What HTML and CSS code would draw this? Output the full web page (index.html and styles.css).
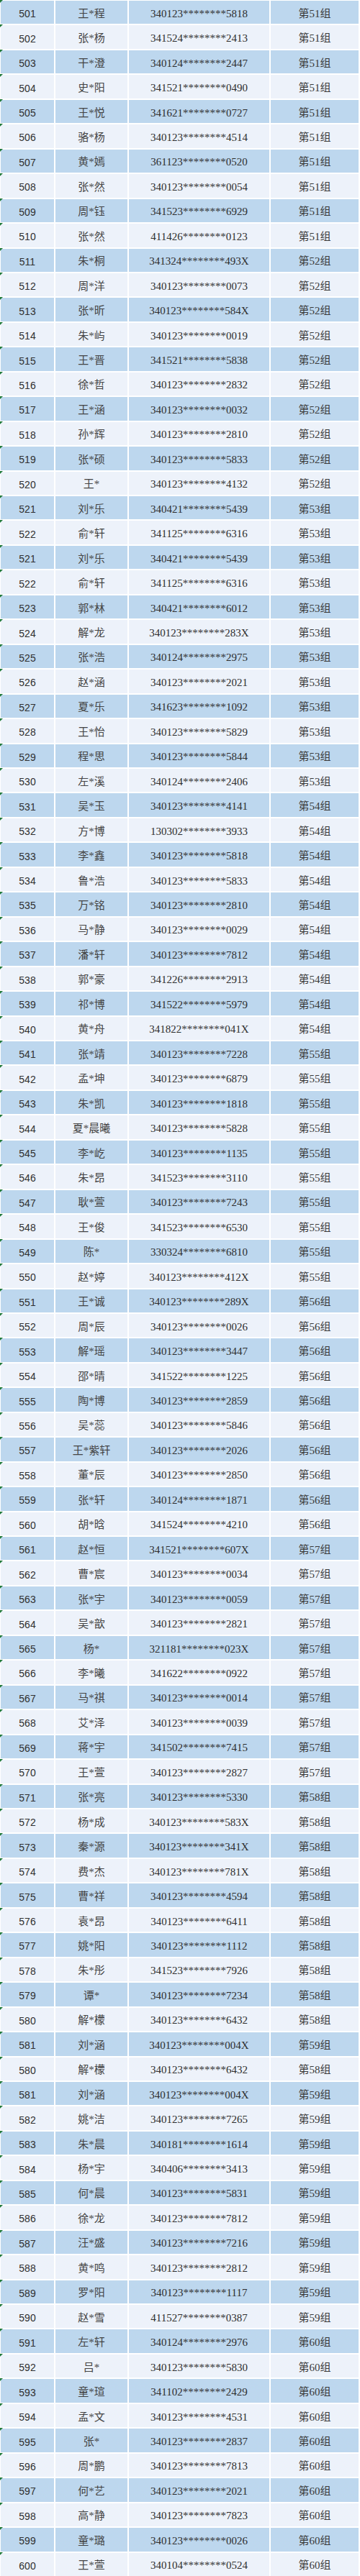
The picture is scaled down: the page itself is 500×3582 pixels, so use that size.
FILE: index.html
```html
<!DOCTYPE html>
<html lang="zh-CN">
<head>
<meta charset="utf-8">
<title>分组名单</title>
<link rel="stylesheet" href="styles.css">
</head>
<body>
<main class="sheet">
<div class="row"><span class="c no">501</span><span class="c nm">王*程</span><span class="c id">340123********5818</span><span class="c gp">第51组</span></div>
<div class="row"><span class="c no">502</span><span class="c nm">张*杨</span><span class="c id">341524********2413</span><span class="c gp">第51组</span></div>
<div class="row"><span class="c no">503</span><span class="c nm">干*澄</span><span class="c id">340124********2447</span><span class="c gp">第51组</span></div>
<div class="row"><span class="c no">504</span><span class="c nm">史*阳</span><span class="c id">341521********0490</span><span class="c gp">第51组</span></div>
<div class="row"><span class="c no">505</span><span class="c nm">王*悦</span><span class="c id">341621********0727</span><span class="c gp">第51组</span></div>
<div class="row"><span class="c no">506</span><span class="c nm">骆*杨</span><span class="c id">340123********4514</span><span class="c gp">第51组</span></div>
<div class="row"><span class="c no">507</span><span class="c nm">黄*嫣</span><span class="c id">361123********0520</span><span class="c gp">第51组</span></div>
<div class="row"><span class="c no">508</span><span class="c nm">张*然</span><span class="c id">340123********0054</span><span class="c gp">第51组</span></div>
<div class="row"><span class="c no">509</span><span class="c nm">周*钰</span><span class="c id">341523********6929</span><span class="c gp">第51组</span></div>
<div class="row"><span class="c no">510</span><span class="c nm">张*然</span><span class="c id">411426********0123</span><span class="c gp">第51组</span></div>
<div class="row"><span class="c no">511</span><span class="c nm">朱*桐</span><span class="c id">341324********493X</span><span class="c gp">第52组</span></div>
<div class="row"><span class="c no">512</span><span class="c nm">周*洋</span><span class="c id">340123********0073</span><span class="c gp">第52组</span></div>
<div class="row"><span class="c no">513</span><span class="c nm">张*昕</span><span class="c id">340123********584X</span><span class="c gp">第52组</span></div>
<div class="row"><span class="c no">514</span><span class="c nm">朱*屿</span><span class="c id">340123********0019</span><span class="c gp">第52组</span></div>
<div class="row"><span class="c no">515</span><span class="c nm">王*晋</span><span class="c id">341521********5838</span><span class="c gp">第52组</span></div>
<div class="row"><span class="c no">516</span><span class="c nm">徐*哲</span><span class="c id">340123********2832</span><span class="c gp">第52组</span></div>
<div class="row"><span class="c no">517</span><span class="c nm">王*涵</span><span class="c id">340123********0032</span><span class="c gp">第52组</span></div>
<div class="row"><span class="c no">518</span><span class="c nm">孙*辉</span><span class="c id">340123********2810</span><span class="c gp">第52组</span></div>
<div class="row"><span class="c no">519</span><span class="c nm">张*硕</span><span class="c id">340123********5833</span><span class="c gp">第52组</span></div>
<div class="row"><span class="c no">520</span><span class="c nm">王*</span><span class="c id">340123********4132</span><span class="c gp">第52组</span></div>
<div class="row"><span class="c no">521</span><span class="c nm">刘*乐</span><span class="c id">340421********5439</span><span class="c gp">第53组</span></div>
<div class="row"><span class="c no">522</span><span class="c nm">俞*轩</span><span class="c id">341125********6316</span><span class="c gp">第53组</span></div>
<div class="row"><span class="c no">521</span><span class="c nm">刘*乐</span><span class="c id">340421********5439</span><span class="c gp">第53组</span></div>
<div class="row"><span class="c no">522</span><span class="c nm">俞*轩</span><span class="c id">341125********6316</span><span class="c gp">第53组</span></div>
<div class="row"><span class="c no">523</span><span class="c nm">郭*林</span><span class="c id">340421********6012</span><span class="c gp">第53组</span></div>
<div class="row"><span class="c no">524</span><span class="c nm">解*龙</span><span class="c id">340123********283X</span><span class="c gp">第53组</span></div>
<div class="row"><span class="c no">525</span><span class="c nm">张*浩</span><span class="c id">340124********2975</span><span class="c gp">第53组</span></div>
<div class="row"><span class="c no">526</span><span class="c nm">赵*涵</span><span class="c id">340123********2021</span><span class="c gp">第53组</span></div>
<div class="row"><span class="c no">527</span><span class="c nm">夏*乐</span><span class="c id">341623********1092</span><span class="c gp">第53组</span></div>
<div class="row"><span class="c no">528</span><span class="c nm">王*怡</span><span class="c id">340123********5829</span><span class="c gp">第53组</span></div>
<div class="row"><span class="c no">529</span><span class="c nm">程*思</span><span class="c id">340123********5844</span><span class="c gp">第53组</span></div>
<div class="row"><span class="c no">530</span><span class="c nm">左*溪</span><span class="c id">340124********2406</span><span class="c gp">第53组</span></div>
<div class="row"><span class="c no">531</span><span class="c nm">吴*玉</span><span class="c id">340123********4141</span><span class="c gp">第54组</span></div>
<div class="row"><span class="c no">532</span><span class="c nm">方*博</span><span class="c id">130302********3933</span><span class="c gp">第54组</span></div>
<div class="row"><span class="c no">533</span><span class="c nm">李*鑫</span><span class="c id">340123********5818</span><span class="c gp">第54组</span></div>
<div class="row"><span class="c no">534</span><span class="c nm">鲁*浩</span><span class="c id">340123********5833</span><span class="c gp">第54组</span></div>
<div class="row"><span class="c no">535</span><span class="c nm">万*铭</span><span class="c id">340123********2810</span><span class="c gp">第54组</span></div>
<div class="row"><span class="c no">536</span><span class="c nm">马*静</span><span class="c id">340123********0029</span><span class="c gp">第54组</span></div>
<div class="row"><span class="c no">537</span><span class="c nm">潘*轩</span><span class="c id">340123********7812</span><span class="c gp">第54组</span></div>
<div class="row"><span class="c no">538</span><span class="c nm">郭*豪</span><span class="c id">341226********2913</span><span class="c gp">第54组</span></div>
<div class="row"><span class="c no">539</span><span class="c nm">祁*博</span><span class="c id">341522********5979</span><span class="c gp">第54组</span></div>
<div class="row"><span class="c no">540</span><span class="c nm">黄*舟</span><span class="c id">341822********041X</span><span class="c gp">第54组</span></div>
<div class="row"><span class="c no">541</span><span class="c nm">张*靖</span><span class="c id">340123********7228</span><span class="c gp">第55组</span></div>
<div class="row"><span class="c no">542</span><span class="c nm">孟*坤</span><span class="c id">340123********6879</span><span class="c gp">第55组</span></div>
<div class="row"><span class="c no">543</span><span class="c nm">朱*凯</span><span class="c id">340123********1818</span><span class="c gp">第55组</span></div>
<div class="row"><span class="c no">544</span><span class="c nm">夏*晨曦</span><span class="c id">340123********5828</span><span class="c gp">第55组</span></div>
<div class="row"><span class="c no">545</span><span class="c nm">李*屹</span><span class="c id">340123********1135</span><span class="c gp">第55组</span></div>
<div class="row"><span class="c no">546</span><span class="c nm">朱*昂</span><span class="c id">341523********3110</span><span class="c gp">第55组</span></div>
<div class="row"><span class="c no">547</span><span class="c nm">耿*萱</span><span class="c id">340123********7243</span><span class="c gp">第55组</span></div>
<div class="row"><span class="c no">548</span><span class="c nm">王*俊</span><span class="c id">341523********6530</span><span class="c gp">第55组</span></div>
<div class="row"><span class="c no">549</span><span class="c nm">陈*</span><span class="c id">330324********6810</span><span class="c gp">第55组</span></div>
<div class="row"><span class="c no">550</span><span class="c nm">赵*婷</span><span class="c id">340123********412X</span><span class="c gp">第55组</span></div>
<div class="row"><span class="c no">551</span><span class="c nm">王*诚</span><span class="c id">340123********289X</span><span class="c gp">第56组</span></div>
<div class="row"><span class="c no">552</span><span class="c nm">周*辰</span><span class="c id">340123********0026</span><span class="c gp">第56组</span></div>
<div class="row"><span class="c no">553</span><span class="c nm">解*瑶</span><span class="c id">340123********3447</span><span class="c gp">第56组</span></div>
<div class="row"><span class="c no">554</span><span class="c nm">邵*晴</span><span class="c id">341522********1225</span><span class="c gp">第56组</span></div>
<div class="row"><span class="c no">555</span><span class="c nm">陶*博</span><span class="c id">340123********2859</span><span class="c gp">第56组</span></div>
<div class="row"><span class="c no">556</span><span class="c nm">吴*蕊</span><span class="c id">340123********5846</span><span class="c gp">第56组</span></div>
<div class="row"><span class="c no">557</span><span class="c nm">王*紫轩</span><span class="c id">340123********2026</span><span class="c gp">第56组</span></div>
<div class="row"><span class="c no">558</span><span class="c nm">董*辰</span><span class="c id">340123********2850</span><span class="c gp">第56组</span></div>
<div class="row"><span class="c no">559</span><span class="c nm">张*轩</span><span class="c id">340124********1871</span><span class="c gp">第56组</span></div>
<div class="row"><span class="c no">560</span><span class="c nm">胡*晗</span><span class="c id">341524********4210</span><span class="c gp">第56组</span></div>
<div class="row"><span class="c no">561</span><span class="c nm">赵*恒</span><span class="c id">341521********607X</span><span class="c gp">第57组</span></div>
<div class="row"><span class="c no">562</span><span class="c nm">曹*宸</span><span class="c id">340123********0034</span><span class="c gp">第57组</span></div>
<div class="row"><span class="c no">563</span><span class="c nm">张*宇</span><span class="c id">340123********0059</span><span class="c gp">第57组</span></div>
<div class="row"><span class="c no">564</span><span class="c nm">吴*歆</span><span class="c id">340123********2821</span><span class="c gp">第57组</span></div>
<div class="row"><span class="c no">565</span><span class="c nm">杨*</span><span class="c id">321181********023X</span><span class="c gp">第57组</span></div>
<div class="row"><span class="c no">566</span><span class="c nm">李*曦</span><span class="c id">341622********0922</span><span class="c gp">第57组</span></div>
<div class="row"><span class="c no">567</span><span class="c nm">马*祺</span><span class="c id">340123********0014</span><span class="c gp">第57组</span></div>
<div class="row"><span class="c no">568</span><span class="c nm">艾*泽</span><span class="c id">340123********0039</span><span class="c gp">第57组</span></div>
<div class="row"><span class="c no">569</span><span class="c nm">蒋*宇</span><span class="c id">341502********7415</span><span class="c gp">第57组</span></div>
<div class="row"><span class="c no">570</span><span class="c nm">王*萱</span><span class="c id">340123********2827</span><span class="c gp">第57组</span></div>
<div class="row"><span class="c no">571</span><span class="c nm">张*亮</span><span class="c id">340123********5330</span><span class="c gp">第58组</span></div>
<div class="row"><span class="c no">572</span><span class="c nm">杨*成</span><span class="c id">340123********583X</span><span class="c gp">第58组</span></div>
<div class="row"><span class="c no">573</span><span class="c nm">秦*源</span><span class="c id">340123********341X</span><span class="c gp">第58组</span></div>
<div class="row"><span class="c no">574</span><span class="c nm">费*杰</span><span class="c id">340123********781X</span><span class="c gp">第58组</span></div>
<div class="row"><span class="c no">575</span><span class="c nm">曹*祥</span><span class="c id">340123********4594</span><span class="c gp">第58组</span></div>
<div class="row"><span class="c no">576</span><span class="c nm">袁*昂</span><span class="c id">340123********6411</span><span class="c gp">第58组</span></div>
<div class="row"><span class="c no">577</span><span class="c nm">姚*阳</span><span class="c id">340123********1112</span><span class="c gp">第58组</span></div>
<div class="row"><span class="c no">578</span><span class="c nm">朱*彤</span><span class="c id">341523********7926</span><span class="c gp">第58组</span></div>
<div class="row"><span class="c no">579</span><span class="c nm">谭*</span><span class="c id">340123********7234</span><span class="c gp">第58组</span></div>
<div class="row"><span class="c no">580</span><span class="c nm">解*檬</span><span class="c id">340123********6432</span><span class="c gp">第58组</span></div>
<div class="row"><span class="c no">581</span><span class="c nm">刘*涵</span><span class="c id">340123********004X</span><span class="c gp">第59组</span></div>
<div class="row"><span class="c no">580</span><span class="c nm">解*檬</span><span class="c id">340123********6432</span><span class="c gp">第58组</span></div>
<div class="row"><span class="c no">581</span><span class="c nm">刘*涵</span><span class="c id">340123********004X</span><span class="c gp">第59组</span></div>
<div class="row"><span class="c no">582</span><span class="c nm">姚*洁</span><span class="c id">340123********7265</span><span class="c gp">第59组</span></div>
<div class="row"><span class="c no">583</span><span class="c nm">朱*晨</span><span class="c id">340181********1614</span><span class="c gp">第59组</span></div>
<div class="row"><span class="c no">584</span><span class="c nm">杨*宇</span><span class="c id">340406********3413</span><span class="c gp">第59组</span></div>
<div class="row"><span class="c no">585</span><span class="c nm">何*晨</span><span class="c id">340123********5831</span><span class="c gp">第59组</span></div>
<div class="row"><span class="c no">586</span><span class="c nm">徐*龙</span><span class="c id">340123********7812</span><span class="c gp">第59组</span></div>
<div class="row"><span class="c no">587</span><span class="c nm">汪*盛</span><span class="c id">340123********7216</span><span class="c gp">第59组</span></div>
<div class="row"><span class="c no">588</span><span class="c nm">黄*鸣</span><span class="c id">340123********2812</span><span class="c gp">第59组</span></div>
<div class="row"><span class="c no">589</span><span class="c nm">罗*阳</span><span class="c id">340123********1117</span><span class="c gp">第59组</span></div>
<div class="row"><span class="c no">590</span><span class="c nm">赵*雪</span><span class="c id">411527********0387</span><span class="c gp">第59组</span></div>
<div class="row"><span class="c no">591</span><span class="c nm">左*轩</span><span class="c id">340124********2976</span><span class="c gp">第60组</span></div>
<div class="row"><span class="c no">592</span><span class="c nm">吕*</span><span class="c id">340123********5830</span><span class="c gp">第60组</span></div>
<div class="row"><span class="c no">593</span><span class="c nm">童*瑄</span><span class="c id">341102********2429</span><span class="c gp">第60组</span></div>
<div class="row"><span class="c no">594</span><span class="c nm">孟*文</span><span class="c id">340123********4531</span><span class="c gp">第60组</span></div>
<div class="row"><span class="c no">595</span><span class="c nm">张*</span><span class="c id">340123********2837</span><span class="c gp">第60组</span></div>
<div class="row"><span class="c no">596</span><span class="c nm">周*鹏</span><span class="c id">340123********7813</span><span class="c gp">第60组</span></div>
<div class="row"><span class="c no">597</span><span class="c nm">何*艺</span><span class="c id">340123********2021</span><span class="c gp">第60组</span></div>
<div class="row"><span class="c no">598</span><span class="c nm">高*静</span><span class="c id">340123********7823</span><span class="c gp">第60组</span></div>
<div class="row"><span class="c no">599</span><span class="c nm">童*璐</span><span class="c id">340123********0026</span><span class="c gp">第60组</span></div>
<div class="row"><span class="c no">600</span><span class="c nm">王*萱</span><span class="c id">340104********0524</span><span class="c gp">第60组</span></div>
</main>
</body>
</html>
```
FILE: styles.css
```css
html, body {
  margin: 0;
  padding: 0;
  background: #ffffff;
}

.sheet {
  box-sizing: border-box;
  width: 500px;
  height: 3582px;
  padding-top: 1px;
  display: grid;
  grid-template-rows: repeat(104, 1fr);
  row-gap: 2px;
  overflow: hidden;
}

.row {
  position: relative;
  display: grid;
  grid-template-columns: 74px 100px 195px 122px;
  column-gap: 2px;
  padding-left: 1px;
  min-height: 0;
}

.row::before {
  content: "";
  position: absolute;
  left: 0;
  top: -1px;
  width: 0;
  height: 0;
  border-top: 4px solid #217a3a;
  border-right: 4px solid transparent;
}

.c {
  display: flex;
  align-items: center;
  justify-content: center;
  padding-top: 4px;
  box-sizing: border-box;
  background: #edf2fa;
  color: #333333;
  font-family: "Liberation Serif", "Noto Sans CJK SC", serif;
  font-size: 15px;
  line-height: 1;
  white-space: nowrap;
}

.row:nth-child(odd) .c {
  background: #bdd7ee;
}

.no {
  font-family: "Liberation Sans", "Noto Sans CJK SC", sans-serif;
  font-size: 14px;
  color: #303030;
}

.nm {
  color: #444444;
  font-size: 15px;
}

.id {
  color: #2e2e2e;
}

.gp {
  color: #3a3a3a;
}
```
